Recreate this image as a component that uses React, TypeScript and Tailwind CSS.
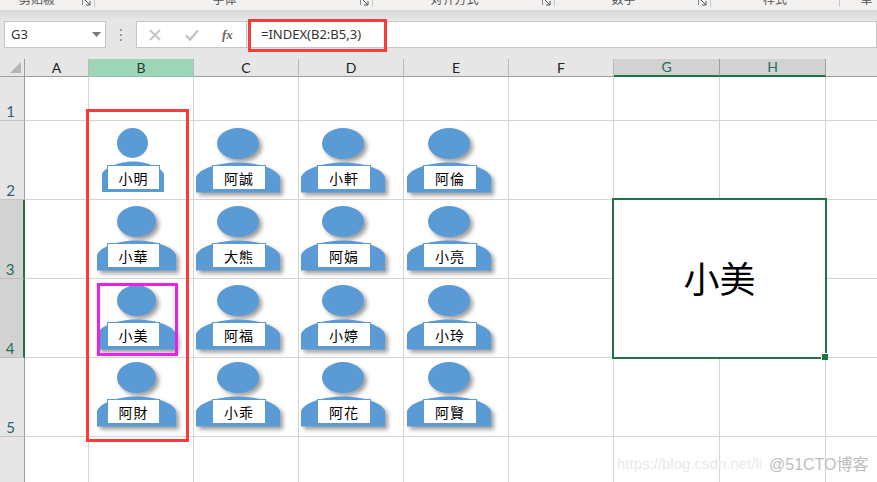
import React from "react";

const cjk = "font-['Noto_Sans_CJK_TC','Noto_Sans_CJK_SC',sans-serif]";
const hdr = "font-['Lato','Noto_Sans',sans-serif]";

type Kind = "narrow" | "mid" | "wide";

function Person({ name, kind }: { name: string; kind: Kind }) {
  const shadow = "drop-shadow-[3px_3px_2px_rgba(0,0,0,0.38)]";
  return (
    <div className="relative h-[64px] w-[84px]">
      {kind === "narrow" && (
        <svg width="90" height="70" className="absolute left-0 top-0">
          <ellipse cx="30.5" cy="15" rx="15.5" ry="15" fill="#5b9bd5" />
          <path d="M0 34 V46 V64 H62 V46 C60 40 45 33.5 31 33.5 C17 33.5 2 40 0 46 Z" fill="#5b9bd5" />
        </svg>
      )}
      {kind === "mid" && (
        <svg width="92" height="72" className={`absolute left-0 top-0 ${shadow}`}>
          <ellipse cx="39.5" cy="15.5" rx="19.5" ry="15.5" fill="#5b9bd5" />
          <path d="M0 64.5 V49 C3 41 20 34.5 39.5 34.5 C59 34.5 76 41 79 49 V64.5 Z" fill="#5b9bd5" />
        </svg>
      )}
      {kind === "wide" && (
        <svg width="92" height="72" className={`absolute left-0 top-0 ${shadow}`}>
          <ellipse cx="42" cy="15.5" rx="21" ry="15.5" fill="#5b9bd5" />
          <path d="M0 64.5 V49 C3 41 21 34.5 42 34.5 C63 34.5 81 41 84 49 V64.5 Z" fill="#5b9bd5" />
        </svg>
      )}
      <div
        className={`absolute top-[37px] flex h-[25px] items-center justify-center border border-[#5b9bd5] bg-white text-[14px] leading-none tracking-[1px] text-black ${cjk} ${
          kind === "narrow" ? "left-[5px] w-[53px]" : kind === "mid" ? "left-[10px] w-[53px]" : "left-[16px] w-[54px]"
        }`}
      >
        {name}
      </div>
    </div>
  );
}

function RowHead({ n, selected, last }: { n: string; selected?: boolean; last?: boolean }) {
  return (
    <div
      className={`flex items-end justify-center border-b pr-[3px] text-[15px] leading-[17px] ${hdr} ${
        selected
          ? "border-r-2 border-b-[#bdbdbd] border-r-[#217346] bg-[#d2d2d2] text-[#1f6e5a]"
          : "border-r border-b-[#c4c4c4] border-r-[#9e9e9e] bg-[#e6e6e6] text-[#2d5f78]"
      } ${last ? "border-b-[#9e9e9e]" : ""}`}
    >
      {n}
    </div>
  );
}

function ColHead({ c, state }: { c: string; state?: "b" | "sel" }) {
  const cls =
    state === "b"
      ? "bg-[#9fd5b7] border-b border-r border-b-[#8cc4a4] border-r-[#b9b9b9] text-[#1f3f33]"
      : state === "sel"
      ? "bg-[#d2d2d2] border-b-2 border-r border-b-[#217346] border-r-[#9e9e9e] text-[#1f6e5a]"
      : "bg-[#e6e6e6] border-b border-r border-b-[#9e9e9e] border-r-[#b9b9b9] text-[#222]";
  return <div className={`flex items-center justify-center text-[14px] leading-none ${hdr} ${cls}`}>{c}</div>;
}

function Cell({ children, className = "" }: { children?: React.ReactNode; className?: string }) {
  return <div className={`border-b border-r border-[#d4d4d4] bg-white ${className}`}>{children}</div>;
}

function Launcher() {
  return (
    <svg width="9" height="9" viewBox="0 0 9 9" className="shrink-0">
      <path d="M0.5 8 V0.5 H8" fill="none" stroke="#8a8a8a" />
      <path d="M3 3 L8 8 M8 4 V8 H4" fill="none" stroke="#555" />
    </svg>
  );
}

function RibbonGroup({ label, className, launcher = true }: { label: string; className: string; launcher?: boolean }) {
  return (
    <div className={`relative flex h-[7px] shrink-0 justify-center overflow-hidden ${className}`}>
      <span className={`-mt-[11px] text-[12px] leading-[20px] text-[#555] ${cjk}`}>{label}</span>
      {launcher && (
        <span className="absolute right-[3px] top-0 -translate-y-[3px]">
          <Launcher />
        </span>
      )}
    </div>
  );
}

const rows: [string, Kind, string, string, string][] = [
  ["小明", "narrow", "阿誠", "小軒", "阿倫"],
  ["小華", "mid", "大熊", "阿娟", "小亮"],
  ["小美", "mid", "阿福", "小婷", "小玲"],
  ["阿財", "mid", "小乖", "阿花", "阿賢"],
];

export default function App() {
  return (
    <div className="relative h-[482px] w-[877px] overflow-hidden bg-[#e6e6e6]">
      {/* Ribbon */}
      <div className="flex h-[10px] bg-[#f3f2f1]">
        <RibbonGroup label="剪贴板" className="w-[95px] border-r border-[#c8c8c8] pr-[20px]" />
        <RibbonGroup label="字体" className="w-[278px] border-r border-[#c8c8c8] pr-[18px]" />
        <RibbonGroup label="对齐方式" className="w-[182px] border-r border-[#c8c8c8] pr-[18px]" />
        <RibbonGroup label="数字" className="w-[156px] border-r border-[#c8c8c8] pr-[18px]" />
        <RibbonGroup label="样式" className="w-[129px] border-r border-[#c8c8c8]" launcher={false} />
        <RibbonGroup label="单" className="flex-1 pl-[16px]" launcher={false} />
      </div>
      <div className="h-[11px] bg-gradient-to-b from-[#d6d6d6] to-[#e8e8e8]" />

      {/* Formula bar */}
      <div className="flex h-[27px] items-stretch">
        <div className="ml-[4px] flex w-[102px] items-center justify-between border border-[#c6c6c6] bg-white pl-[6px] pr-[3px]">
          <span className="font-['Noto_Sans',sans-serif] text-[13px] leading-none text-[#333]">G3</span>
          <svg width="9" height="5" className="mr-[1px]">
            <path d="M0 0 H9 L4.5 5 Z" fill="#7a7a7a" />
          </svg>
        </div>
        <div className="flex w-[30px] items-center justify-center">
          <div className="flex flex-col gap-[3px]">
            <span className="h-[2px] w-[2px] bg-[#9a9a9a]" />
            <span className="h-[2px] w-[2px] bg-[#9a9a9a]" />
            <span className="h-[2px] w-[2px] bg-[#9a9a9a]" />
          </div>
        </div>
        <div className="flex w-[110px] items-center border border-r-0 border-[#c6c6c6] bg-white">
          <svg width="12" height="12" viewBox="0 0 12 12" className="ml-[12px]">
            <path d="M1 1 L11 11 M11 1 L1 11" stroke="#c4c4c4" strokeWidth="2" fill="none" />
          </svg>
          <svg width="14" height="12" viewBox="0 0 14 12" className="ml-[24px]">
            <path d="M1 6.5 L5 10.5 L13 1.5" stroke="#c4c4c4" strokeWidth="2.4" fill="none" />
          </svg>
          <span className="ml-[23px] font-['Liberation_Serif',serif] text-[13px] font-bold italic leading-none text-[#666]">fx</span>
        </div>
        <div className="flex flex-1 items-center border border-[#c6c6c6] bg-white pl-[14px]">
          <span className="font-['Noto_Sans',sans-serif] text-[13px] leading-none text-[#333]">=INDEX(B2:B5,3)</span>
        </div>
      </div>
      <div className="h-[11px]" />

      {/* Sheet */}
      <div className="grid h-[423px] grid-cols-[25px_64px_105px_105px_105px_105px_105px_106px_106px_1fr] grid-rows-[18px_44px_79px_79px_79px_79px_1fr]">
        <div className="flex items-end justify-end border-b border-r border-[#9e9e9e] bg-[#e6e6e6] pb-[3px] pr-[3px]">
          <svg width="11" height="11">
            <path d="M11 0 V11 H0 Z" fill="#b4b4b4" />
          </svg>
        </div>
        <ColHead c="A" />
        <ColHead c="B" state="b" />
        <ColHead c="C" />
        <ColHead c="D" />
        <ColHead c="E" />
        <ColHead c="F" />
        <ColHead c="G" state="sel" />
        <ColHead c="H" state="sel" />
        <div className="border-b border-[#9e9e9e] bg-[#e6e6e6]" />

        <RowHead n="1" />
        {Array.from({ length: 8 }).map((_, i) => (
          <Cell key={i} />
        ))}
        <div className="border-b border-[#d4d4d4] bg-white" />

        {rows.map((r, i) => {
          const pad = i === 3 ? "pt-[4px]" : i === 0 ? "pt-[7px]" : "pt-[6px]";
          return (
            <React.Fragment key={r[0]}>
              <RowHead n={String(i + 2)} selected={i === 1 || i === 2} last={i === 3} />
              <Cell />
              <Cell className={`${pad} ${r[1] === "narrow" ? "pl-[13px]" : "pl-[8px]"}`}>
                <Person name={r[0]} kind={r[1]} />
              </Cell>
              <Cell className={`${pad} pl-[2px]`}>
                <Person name={r[2]} kind="wide" />
              </Cell>
              <Cell className={`${pad} pl-[2px]`}>
                <Person name={r[3]} kind="wide" />
              </Cell>
              <Cell className={`${pad} pl-[3px]`}>
                <Person name={r[4]} kind="wide" />
              </Cell>
              <Cell />
              {i === 1 && (
                <div
                  className={`relative col-span-2 row-span-2 -mb-px -ml-[2px] -mr-px -mt-[2px] flex items-center justify-center border-2 border-[#217346] bg-white pb-[4px] text-[36px] font-normal leading-none text-black ${cjk}`}
                >
                  小美
                  <span className="absolute -bottom-[3px] -right-[3px] h-[7px] w-[7px] border-l border-t border-white bg-[#217346]" />
                </div>
              )}
              {i !== 1 && i !== 2 && (
                <>
                  <Cell />
                  <Cell />
                </>
              )}
              <div className="border-b border-[#d4d4d4] bg-white" />
            </React.Fragment>
          );
        })}

        <div className="border-r border-[#9e9e9e] bg-[#e6e6e6]" />
        {Array.from({ length: 8 }).map((_, i) => (
          <div key={i} className="border-r border-[#d4d4d4] bg-white" />
        ))}
        <div className="bg-white" />
      </div>

      {/* Annotations over the sheet */}
      <div className="absolute left-[248px] top-[19px] h-[33px] w-[139px] border-[3px] border-[#fb3a3a]" />
      <div className="absolute left-[86px] top-[109px] h-[333px] w-[103px] border-[3px] border-[#fb3a3a]" />
      <div className="absolute left-[97px] top-[283px] h-[73px] w-[81px] border-[3px] border-[#ee1fe6]" />

      {/* Watermarks */}
      <div className="absolute left-[617px] top-[455px] font-['Liberation_Sans',sans-serif] text-[15px] leading-[18px] text-[#e8e8e8]">
        https://blog.csdn.net/li
      </div>
      <div className="absolute left-[769px] top-[454px] font-['Liberation_Sans','Noto_Sans_CJK_SC',sans-serif] text-[16px] leading-[22px] text-[#bdbdbd]">
        @51CTO博客
      </div>
    </div>
  );
}
